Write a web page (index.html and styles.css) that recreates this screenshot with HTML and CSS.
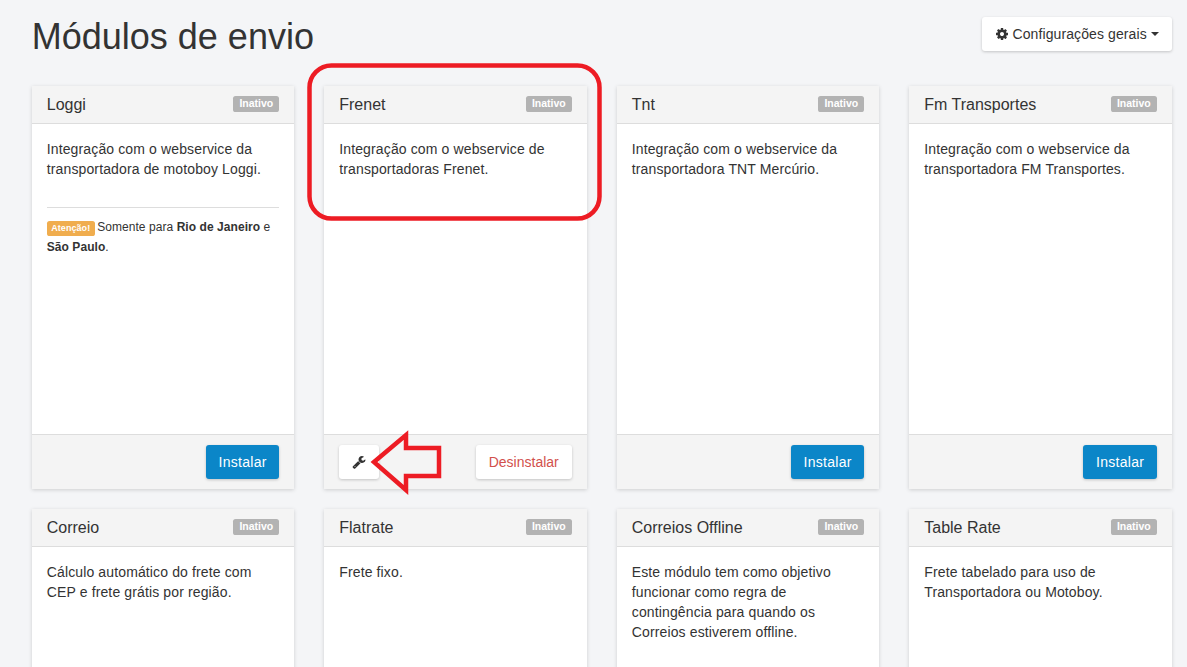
FILE: index.html
```html
<!DOCTYPE html>
<html lang="pt-BR">
<head>
<meta charset="utf-8">
<title>Módulos de envio</title>
<link rel="stylesheet" href="styles.css">
</head>
<body>
<main class="page">
  <header class="page-head">
    <h1 class="page-title">Módulos de envio</h1>
    <button class="btn btn-default btn-config" type="button">
      <svg class="icon" viewBox="0 0 1792 1792" aria-hidden="true"><path d="M1152 896q0-106-75-181t-181-75-181 75-75 181 75 181 181 75 181-75 75-181zm512-109v222q0 12-8 23t-20 13l-185 28q-19 54-39 91 35 50 107 138 10 12 10 25t-9 23q-27 37-99 108t-94 71q-12 0-26-9l-138-108q-44 23-91 38-16 136-29 186-7 28-36 28h-222q-14 0-24.5-8.5t-11.5-21.5l-28-184q-49-16-90-37l-141 107q-10 9-25 9-14 0-25-11-126-114-165-168-7-10-7-23 0-12 8-23 15-21 51-66.5t54-70.5q-27-50-41-99l-183-27q-13-2-21-12.5t-8-23.5v-222q0-12 8-23t19-13l186-28q14-46 39-92-40-57-107-138-10-12-10-24 0-10 9-23 26-36 98.5-107.5t94.5-71.5q13 0 26 10l138 107q44-23 91-38 16-136 29-186 7-28 36-28h222q14 0 24.5 8.5t11.5 21.5l28 184q49 16 90 37l142-107q9-9 24-9 13 0 25 10 129 119 165 170 7 8 7 22 0 12-8 23-15 21-51 66.5t-54 70.5q26 50 41 98l183 28q13 2 21 12.5t8 23.5z"/></svg>
      <span class="btn-text">Configurações gerais</span>
      <span class="caret"></span>
    </button>
  </header>

  <section class="grid">
    <article class="card">
      <div class="card-head"><h2 class="card-title">Loggi</h2><span class="label label-muted">Inativo</span></div>
      <div class="card-body">
        <p class="desc">Integração com o webservice da transportadora de motoboy Loggi.</p>
        <hr class="rule">
        <p class="note"><span class="label label-warn">Atenção!</span> Somente para <b>Rio de Janeiro</b> e <b>São Paulo</b>.</p>
      </div>
      <div class="card-foot"><button class="btn btn-primary" type="button">Instalar</button></div>
    </article>

    <article class="card">
      <div class="card-head"><h2 class="card-title">Frenet</h2><span class="label label-muted">Inativo</span></div>
      <div class="card-body">
        <p class="desc">Integração com o webservice de transportadoras Frenet.</p>
      </div>
      <div class="card-foot card-foot-split">
        <button class="btn btn-default btn-tool" type="button" aria-label="Configurar">
          <svg class="icon" viewBox="0 0 1792 1792" aria-hidden="true"><path d="M448 1472q0-26-19-45t-45-19-45 19-19 45 19 45 45 19 45-19 19-45zm644-420l-682 682q-37 37-90 37-52 0-91-37l-106-108q-38-36-38-90 0-53 38-91l681-681q39 98 114.5 173.5t173.5 114.5zm634-435q0 39-23 106-47 134-164.5 217.5t-258.5 83.5q-185 0-316.5-131.5t-131.5-316.5 131.5-316.5 316.5-131.5q58 0 121.5 16.5t107.5 46.5q16 11 16 28t-16 28l-293 169v224l193 107q5-3 79-48.5t135.5-81 70.5-35.5q15 0 23.5 10t8.5 25z"/></svg>
        </button>
        <button class="btn btn-default btn-danger-text" type="button">Desinstalar</button>
      </div>
    </article>

    <article class="card">
      <div class="card-head"><h2 class="card-title">Tnt</h2><span class="label label-muted">Inativo</span></div>
      <div class="card-body">
        <p class="desc">Integração com o webservice da transportadora TNT Mercúrio.</p>
      </div>
      <div class="card-foot"><button class="btn btn-primary" type="button">Instalar</button></div>
    </article>

    <article class="card">
      <div class="card-head"><h2 class="card-title">Fm Transportes</h2><span class="label label-muted">Inativo</span></div>
      <div class="card-body">
        <p class="desc">Integração com o webservice da transportadora FM Transportes.</p>
      </div>
      <div class="card-foot"><button class="btn btn-primary" type="button">Instalar</button></div>
    </article>

    <article class="card">
      <div class="card-head"><h2 class="card-title">Correio</h2><span class="label label-muted">Inativo</span></div>
      <div class="card-body">
        <p class="desc">Cálculo automático do frete com CEP e frete grátis por região.</p>
      </div>
      <div class="card-foot"><button class="btn btn-primary" type="button">Instalar</button></div>
    </article>

    <article class="card">
      <div class="card-head"><h2 class="card-title">Flatrate</h2><span class="label label-muted">Inativo</span></div>
      <div class="card-body">
        <p class="desc">Frete fixo.</p>
      </div>
      <div class="card-foot"><button class="btn btn-primary" type="button">Instalar</button></div>
    </article>

    <article class="card">
      <div class="card-head"><h2 class="card-title">Correios Offline</h2><span class="label label-muted">Inativo</span></div>
      <div class="card-body">
        <p class="desc">Este módulo tem como objetivo funcionar como regra de contingência para quando os Correios estiverem offline.</p>
      </div>
      <div class="card-foot"><button class="btn btn-primary" type="button">Instalar</button></div>
    </article>

    <article class="card">
      <div class="card-head"><h2 class="card-title">Table Rate</h2><span class="label label-muted">Inativo</span></div>
      <div class="card-body">
        <p class="desc">Frete tabelado para uso de Transportadora ou Motoboy.</p>
      </div>
      <div class="card-foot"><button class="btn btn-primary" type="button">Instalar</button></div>
    </article>
  </section>
</main>

<svg class="annotations" width="1187" height="667" viewBox="0 0 1187 667" aria-hidden="true">
  <rect class="mark" x="309.5" y="65.5" width="290" height="153" rx="22" ry="22"/>
  <polygon class="mark" points="374,462 406,435 406,448 439,448 439,476 406,476 406,490"/>
</svg>
</body>
</html>
```

FILE: styles.css
```css
* {
  box-sizing: border-box;
}

html {
  overflow: hidden;
}

body {
  margin: 0;
  background: #f4f5f7;
  color: #333;
  font-family: "Liberation Sans", Arial, sans-serif;
  font-size: 14px;
  line-height: 20px;
}

.page {
  padding: 17px 15.25px 0 31.75px;
}

.page-head {
  display: flex;
  justify-content: space-between;
  align-items: flex-start;
  height: 69px;
}

.page-title {
  margin: 0;
  font-size: 36px;
  font-weight: 400;
  line-height: 40px;
}

.grid {
  display: grid;
  grid-template-columns: repeat(4, 1fr);
  grid-auto-rows: 403px;
  gap: 20px 30px;
}

.card {
  display: flex;
  flex-direction: column;
  background: #fff;
  box-shadow: 0 1px 4px rgba(0, 0, 0, 0.16);
}

.card-head {
  display: flex;
  justify-content: space-between;
  align-items: flex-start;
  height: 38px;
  padding: 10px 15px 0;
  background: #f4f4f4;
  border-bottom: 1px solid #ddd;
}

.card-title {
  margin: 0;
  font-size: 16px;
  font-weight: 400;
  line-height: 17.6px;
}

.label {
  display: inline-block;
  padding: 2px 6px 3px;
  border-radius: 2.6px;
  color: #fff;
  font-size: 10.5px;
  font-weight: 700;
  line-height: 10.5px;
  white-space: nowrap;
}

.label-muted {
  background: #b3b3b3;
}

.label-warn {
  margin-right: -1px;
  padding: 3px 4.5px;
  background: #f0ad4e;
  font-size: 9px;
  line-height: 9px;
}

.card-body {
  flex: 1;
  padding: 15px;
}

.desc {
  margin: 0;
  letter-spacing: 0.13px;
}

.rule {
  margin: 28px 0 9px;
  border: 0;
  border-top: 1px solid #ddd;
}

.note {
  margin: 0;
  font-size: 12px;
  letter-spacing: 0.06px;
}

.card-foot {
  display: flex;
  justify-content: flex-end;
  height: 55px;
  padding: 10px 15px;
  background: #f4f4f4;
  border-top: 1px solid #ddd;
}

.card-foot-split {
  justify-content: space-between;
}

.btn {
  height: 34px;
  padding: 0 13px;
  border: 0;
  border-radius: 3px;
  font-family: inherit;
  font-size: 14px;
  line-height: 20px;
  white-space: nowrap;
  box-shadow: 0 1px 3px rgba(0, 0, 0, 0.2);
}

.btn-default {
  background: #fff;
  color: #333;
}

.btn-primary {
  padding: 0 12.5px;
  background: #0b86c8;
  color: #fff;
  letter-spacing: 0.3px;
}

.btn-danger-text {
  color: #d2504c;
}

.btn-config {
  display: flex;
  align-items: center;
  gap: 3px;
}

.btn-text {
  letter-spacing: 0.1px;
}

.btn-tool {
  display: flex;
  align-items: center;
  justify-content: center;
  width: 40px;
  padding: 0;
}

.icon {
  display: block;
  width: 14px;
  height: 14px;
  fill: #333;
}

.caret {
  width: 0;
  height: 0;
  margin-left: 1px;
  border-top: 4px solid #333;
  border-left: 4px solid transparent;
  border-right: 4px solid transparent;
}

.annotations {
  position: absolute;
  top: 0;
  left: 0;
  pointer-events: none;
}

.mark {
  fill: none;
  stroke: #ed1c24;
  stroke-width: 4.5;
}
```
